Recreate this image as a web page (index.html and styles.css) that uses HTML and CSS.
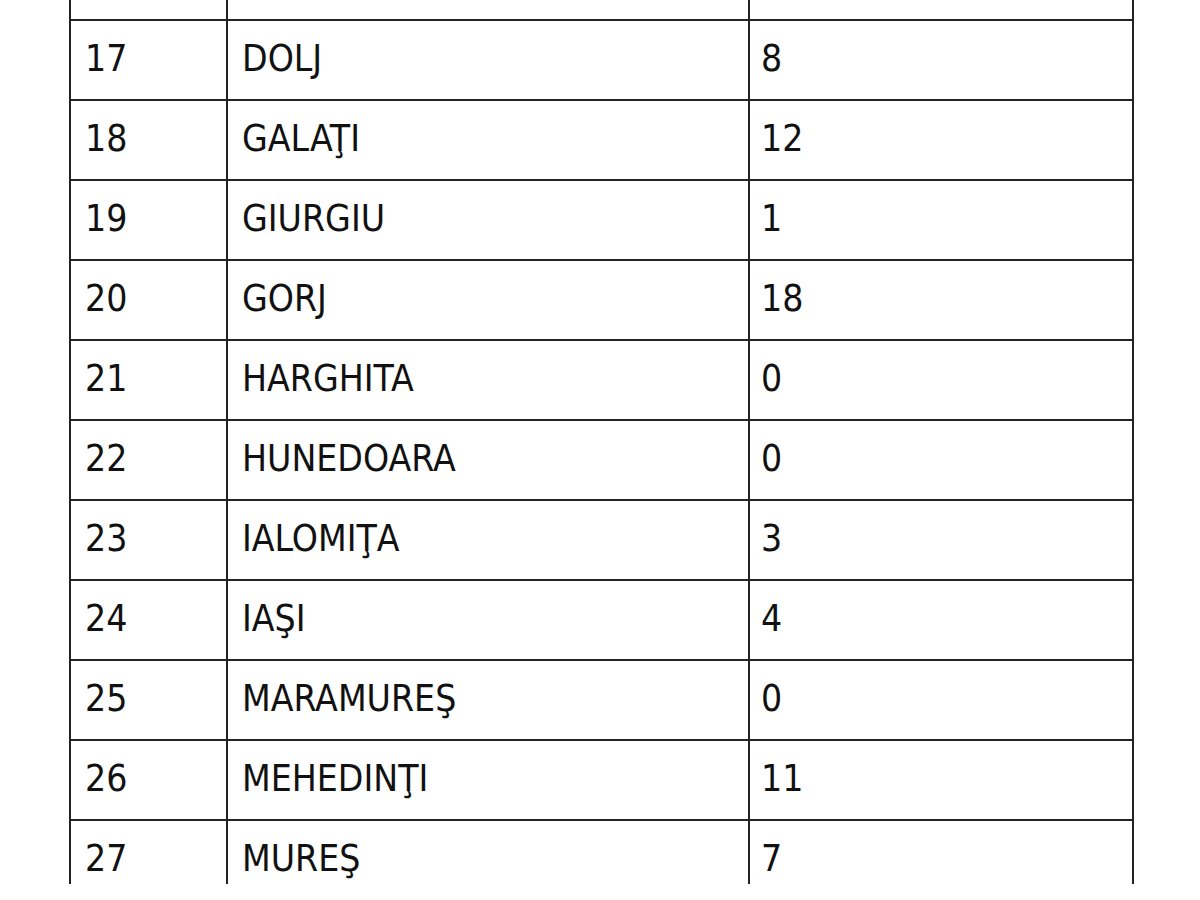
FILE: index.html
```html
<!DOCTYPE html>
<html lang="ro">
<head>
<meta charset="utf-8">
<title>Tabel judeţe</title>
<link rel="stylesheet" href="styles.css">
</head>
<body>
<div class="sheet">
  <table class="counties">
    <colgroup>
      <col class="c-nr">
      <col class="c-name">
      <col class="c-val">
    </colgroup>
    <tbody>
      <tr><td>16</td><td>DÂMBOVIŢA</td><td>5</td></tr>
      <tr><td>17</td><td>DOLJ</td><td>8</td></tr>
      <tr><td>18</td><td>GALAŢI</td><td>12</td></tr>
      <tr><td>19</td><td>GIURGIU</td><td>1</td></tr>
      <tr><td>20</td><td>GORJ</td><td>18</td></tr>
      <tr><td>21</td><td>HARGHITA</td><td>0</td></tr>
      <tr><td>22</td><td>HUNEDOARA</td><td>0</td></tr>
      <tr><td>23</td><td>IALOMIŢA</td><td>3</td></tr>
      <tr><td>24</td><td>IAŞI</td><td>4</td></tr>
      <tr><td>25</td><td>MARAMUREŞ</td><td>0</td></tr>
      <tr><td>26</td><td>MEHEDINŢI</td><td>11</td></tr>
      <tr><td>27</td><td>MUREŞ</td><td>7</td></tr>
    </tbody>
  </table>
</div>
</body>
</html>
```

FILE: styles.css
```css
html, body {
  margin: 0;
  padding: 0;
  background: #ffffff;
}

body {
  width: 1200px;
  height: 900px;
  overflow: hidden;
}

.sheet {
  height: 884px;
  overflow: hidden;
  padding-left: 69px;
}

.counties {
  border-collapse: collapse;
  table-layout: fixed;
  width: 1065px;
  margin-top: -61px;
  font-family: "DejaVu Sans Condensed", "DejaVu Sans", sans-serif;
  font-stretch: condensed;
  font-size: 37px;
  color: #111111;
}

.c-nr { width: 157px; }
.c-name { width: 522px; }
.c-val { width: 384px; }

.counties td {
  border: 2px solid #222222;
  height: 76px;
  padding: 0 0 2px 14px;
  line-height: 40px;
  vertical-align: middle;
  white-space: nowrap;
}

.counties td:last-child {
  padding-left: 11px;
}
```
